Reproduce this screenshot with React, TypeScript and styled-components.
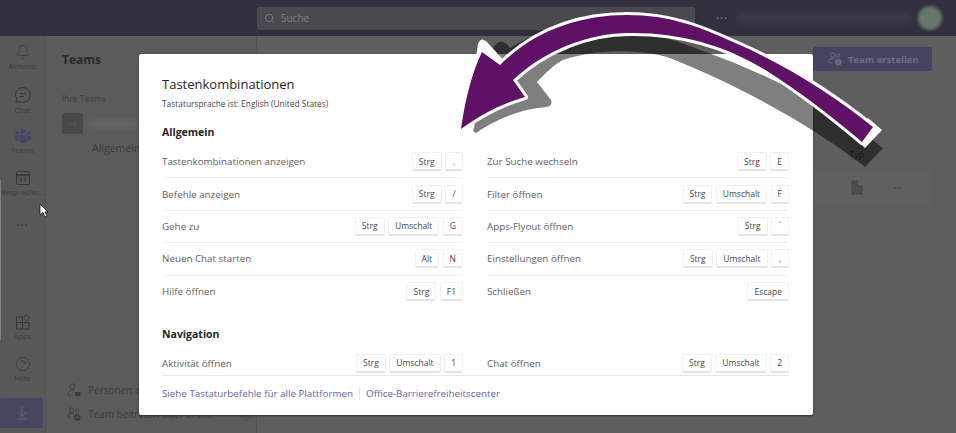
import React from "react";
import styled, { createGlobalStyle } from "styled-components";
import { Bell, CircleHelp, ArrowDownToLine, Search, Settings } from "lucide-react";

const GlobalStyle = createGlobalStyle`
    html, body {
        margin: 0;
        padding: 0;
        background: #595959;
        font-family: "Open Sans", "Noto Sans", sans-serif;
    }
`;

const Page = styled.div`
    position: relative;
    width: 956px;
    height: 433px;
    overflow: hidden;
    display: flex;
    flex-direction: column;
    background: #5a5a5a;
`;

const TopBar = styled.header`
    height: 36px;
    flex: none;
    display: flex;
    align-items: center;
    padding-left: 257px;
    background: #32303e;
`;

const SearchBox = styled.div`
    width: 438px;
    height: 23px;
    display: flex;
    align-items: center;
    gap: 6px;
    padding-left: 7px;
    box-sizing: border-box;
    border-radius: 2px;
    background: #4a4950;
    color: #7d7c83;
    font-size: 10px;
`;

const TopDots = styled.div`
    margin-left: 21px;
    color: #6f6e78;
    font-size: 8px;
    letter-spacing: 1px;
    line-height: 1;
`;

const BlurredName = styled.div`
    width: 172px;
    height: 9px;
    margin-left: 10px;
    background: #3d3c4a;
    filter: blur(3px);
`;

const Avatar = styled.div`
    width: 24px;
    height: 24px;
    margin-left: 8px;
    border-radius: 50%;
    background: #66766a;
    filter: blur(1.5px);
`;

const Body = styled.div`
    flex: 1;
    display: flex;
    min-height: 0;
`;

const Rail = styled.nav`
    position: relative;
    width: 46px;
    flex: none;
    display: flex;
    flex-direction: column;
    align-items: center;
    box-sizing: border-box;
    padding-top: 8px;
    background: #585858;
    border-right: 1px solid #535353;
`;

const RailEdge = styled.div`
    position: absolute;
    left: 0;
    top: 144px;
    width: 1px;
    height: 160px;
    background: #808080;
`;

const RailItem = styled.div<{ $active?: boolean }>`
    width: 100%;
    height: 42px;
    flex: none;
    display: flex;
    flex-direction: column;
    align-items: center;
    color: ${p => (p.$active ? "#45446a" : "#363636")};
    font-size: 7.5px;
    line-height: 10px;
    white-space: nowrap;
    overflow: hidden;

    span {
        margin-top: 1px;
        color: ${p => (p.$active ? "#3f3f4f" : "#3c3c3c")};
    }
`;

const RailDots = styled.div`
    height: 26px;
    color: #3c3c3c;
    font-size: 8px;
    letter-spacing: 1px;
    line-height: 26px;
`;

const RailSpacer = styled.div`
    flex: 1;
`;

const DownloadButton = styled.div`
    align-self: flex-start;
    width: 43px;
    height: 30px;
    flex: none;
    margin-bottom: 5px;
    display: flex;
    align-items: center;
    justify-content: center;
    border-radius: 2px;
    background: #474661;
    color: #75748a;
`;

const ListPanel = styled.aside`
    width: 211px;
    flex: none;
    display: flex;
    flex-direction: column;
    box-sizing: border-box;
    background: #5b5b5b;
    border-right: 1px solid #535353;
`;

const PanelTitle = styled.div`
    padding: 15px 16px 0;
    height: 47px;
    box-sizing: border-box;
    color: #2a2a2a;
    font-size: 12px;
    font-weight: 700;
`;

const TeamsLabel = styled.div`
    padding: 10px 16px 0;
    color: #3d3d3d;
    font-size: 8.5px;
`;

const TeamRow = styled.div`
    display: flex;
    align-items: center;
    gap: 6px;
    padding: 9px 16px 0;
`;

const TeamBadge = styled.div`
    width: 21px;
    height: 21px;
    display: flex;
    align-items: center;
    justify-content: center;
    border-radius: 2px;
    background: #484848;
    color: #5d5d5d;
    font-size: 6px;
`;

const BlurredTeam = styled.div`
    width: 48px;
    height: 8px;
    background: #636363;
    filter: blur(2px);
`;

const Channel = styled.div`
    padding: 7px 0 0 46px;
    color: #3d3d3d;
    font-size: 10.5px;
`;

const PanelFooter = styled.div`
    margin-top: auto;
    padding: 0 0 10px 21px;
    display: flex;
    flex-direction: column;
    gap: 6px;
`;

const FooterItem = styled.div`
    display: flex;
    align-items: center;
    gap: 7px;
    color: #3d3d3d;
    font-size: 10px;
    height: 18px;
    white-space: nowrap;
`;

const FooterGear = styled.div`
    margin-left: 21px;
    display: flex;
`;

const Main = styled.main`
    flex: 1;
    display: flex;
    flex-direction: column;
    align-items: flex-end;
    padding: 11px 24px 0 0;
    background: #5e5e5e;
`;

const CreateButton = styled.div`
    width: 119px;
    height: 24px;
    flex: none;
    display: flex;
    align-items: center;
    gap: 6px;
    padding-left: 15px;
    box-sizing: border-box;
    border-radius: 2px;
    background: #454460;
    color: #6c6b80;
    font-size: 9.5px;
    font-weight: 700;
`;

const TypeLabel = styled.div`
    width: 119px;
    height: 99px;
    padding: 77px 0 0 36px;
    box-sizing: border-box;
    color: #333;
    font-size: 9px;
`;

const TeamTableRow = styled.div`
    width: 119px;
    height: 35px;
    display: flex;
    align-items: center;
    gap: 30px;
    padding-left: 38px;
    box-sizing: border-box;
    background: #606060;
    color: #454545;
    font-size: 8px;
`;

const Dialog = styled.div`
    position: absolute;
    left: 139px;
    top: 54px;
    width: 674px;
    height: 361px;
    display: flex;
    flex-direction: column;
    box-sizing: border-box;
    padding: 0 24px 0 23px;
    background: #fff;
    border-radius: 2px;
    box-shadow: 0 1px 2px rgba(0, 0, 0, 0.5);
`;

const DialogTitle = styled.h1`
    margin: 20px 0 0;
    color: #252423;
    font-size: 13px;
    line-height: 20px;
    font-weight: 500;
`;

const DialogHint = styled.p`
    margin: 3px 0 0;
    color: #484644;
    font-size: 8.4px;
    line-height: 14px;
`;

const ScrollArea = styled.div`
    flex: 1;
    min-height: 0;
    overflow: hidden;
`;

const SectionTitle = styled.h2`
    margin: 0 0 7px;
    color: #252423;
    font-size: 10.5px;
    line-height: 14px;
    font-weight: 700;
`;

const Section = styled.section`
    margin-top: 14px;

    & + & {
        margin-top: 19px;
    }

    & + & ${SectionTitle} {
        margin-bottom: 6px;
    }
`;

const ShortcutGrid = styled.div`
    display: grid;
    grid-template-columns: 301px 302px;
    column-gap: 24px;
`;

const ShortcutRow = styled.div<{ $last?: boolean }>`
    height: 32.4px;
    box-sizing: border-box;
    display: flex;
    align-items: center;
    justify-content: space-between;
    color: #5f5e5c;
    font-size: 9.8px;
    border-bottom: ${p => (p.$last ? "none" : "1px solid #f0f0f0")};
`;

const Keys = styled.div`
    display: flex;
    gap: 3.5px;
`;

const Key = styled.kbd`
    min-width: 18px;
    height: 19px;
    padding: 0 6px;
    box-sizing: border-box;
    display: flex;
    align-items: center;
    justify-content: center;
    border: 1px solid #f0f0f0;
    border-bottom: 2px solid #e4e4e4;
    border-radius: 2px;
    background: #fff;
    color: #484644;
    font-family: inherit;
    font-size: 8.5px;
`;

const DialogFooter = styled.div`
    height: 40px;
    flex: none;
    display: flex;
    align-items: center;
    padding-bottom: 4px;
    box-sizing: border-box;
    border-top: 1px solid #e8e8e8;
    color: #6264a7;
    font-size: 9.8px;
`;

const FooterDivider = styled.span`
    width: 1px;
    height: 13px;
    margin: 0 6px;
    background: #e4e4e4;
`;

const Overlay = styled.svg`
    position: absolute;
    left: 0;
    top: 0;
    pointer-events: none;
`;

const general: [string, string[]][] = [
    ["Tastenkombinationen anzeigen", ["Strg", "."]],
    ["Zur Suche wechseln", ["Strg", "E"]],
    ["Befehle anzeigen", ["Strg", "/"]],
    ["Filter öffnen", ["Strg", "Umschalt", "F"]],
    ["Gehe zu", ["Strg", "Umschalt", "G"]],
    ["Apps-Flyout öffnen", ["Strg", "`"]],
    ["Neuen Chat starten", ["Alt", "N"]],
    ["Einstellungen öffnen", ["Strg", "Umschalt", ","]],
    ["Hilfe öffnen", ["Strg", "F1"]],
    ["Schließen", ["Escape"]],
];

const navigation: [string, string[]][] = [
    ["Aktivität öffnen", ["Strg", "Umschalt", "1"]],
    ["Chat öffnen", ["Strg", "Umschalt", "2"]],
];

const Shortcuts: React.FC<{ rows: [string, string[]][] }> = ({ rows }) => (
    <ShortcutGrid>
        {rows.map(([label, keys], i) => (
            <ShortcutRow key={label} $last={i >= rows.length - 2}>
                {label}
                <Keys>
                    {keys.map(k => (
                        <Key key={k}>{k}</Key>
                    ))}
                </Keys>
            </ShortcutRow>
        ))}
    </ShortcutGrid>
);

const ChatIcon = () => (
    <svg width={18} height={18} viewBox="0 0 18 18" fill="none" stroke="currentColor">
        <path d="M9 1.5a7.5 7.5 0 1 1-3.6 14.1L1.8 16.5l1-3.3A7.5 7.5 0 0 1 9 1.5Z" />
        <path d="M5.8 7.5h6.4M5.8 10.5h4" />
    </svg>
);

const TeamsIcon = () => (
    <svg width={18} height={16} viewBox="0 0 18 16" fill="currentColor">
        <circle cx={9} cy={3.2} r={2.6} />
        <circle cx={3.2} cy={5} r={1.8} />
        <circle cx={14.8} cy={5} r={1.8} />
        <path d="M5.5 6.8h7v5a3.5 3.5 0 0 1-7 0Z" />
        <path d="M.8 7.6h3.6v4.2c0 .5 0 1 .2 1.4C2.4 13.4.8 12 .8 10ZM17.2 7.6h-3.6v4.2c0 .5 0 1-.2 1.4 2.2.2 3.8-1.2 3.8-3.2Z" />
    </svg>
);

const CalendarIcon = () => (
    <svg width={16} height={16} viewBox="0 0 16 16" fill="none" stroke="currentColor">
        <rect x={1.5} y={1.5} width={13} height={13} rx={1} />
        <path d="M1.5 5h13" strokeWidth={1.6} />
        <path d="M5 8h2M5 11h2M9 8h2M9 11h2M6 7.5v4M10 7.5v4" strokeWidth={0.7} />
    </svg>
);

const AppsIcon = () => (
    <svg width={16} height={16} viewBox="0 0 16 16" fill="none" stroke="currentColor">
        <path d="M1.5 3h6v5.5h-6ZM1.5 8.5h6V15h-6ZM7.5 8.5h6.5V15H7.5Z" />
        <path d="M11.5.8 14.8 4l-3.3 3.2L8.3 4Z" />
    </svg>
);

const InviteIcon = () => (
    <svg width={14} height={14} viewBox="0 0 14 14" fill="none" stroke="currentColor" strokeWidth={0.9}>
        <circle cx={5.5} cy={3.5} r={2.6} />
        <path d="M.8 11.5c0-3 2-4 4.5-4 .7 0 1.3.1 1.8.3M.8 11.5c0 .8.8 1.2 3.2 1.2" />
        <rect x={8} y={9} width={5.4} height={4} fill="currentColor" stroke="none" />
    </svg>
);

const TeamAddIcon = () => (
    <svg width={14} height={14} viewBox="0 0 14 14" fill="none" stroke="currentColor" strokeWidth={0.9}>
        <circle cx={4.5} cy={3} r={2.2} />
        <circle cx={10} cy={3.6} r={1.7} />
        <path d="M1 9c0-1.8 1.2-2.6 3.5-2.6S7 7 7 8M1 9c0 1.2 1 2 3 2" />
        <circle cx={10.3} cy={10.3} r={3.2} fill="currentColor" stroke="none" />
        <path d="M10.3 8.6v3.4M8.6 10.3H12" stroke="#5b5b5b" />
    </svg>
);

const BuildingIcon = () => (
    <svg width={12} height={15} viewBox="0 0 12 15" fill="#4d4d4d" stroke="#3f3f3f" strokeWidth={0.7}>
        <path d="M1 1h5.5v5H11v8H1Z" />
        <path d="M3 3.5h2M3 6.5h2M3 9.5h2M8 9h1.5M8 11.5h1.5" />
    </svg>
);

const Arrow: React.FC = () => (
    <Overlay width={956} height={433} viewBox="0 0 956 433">
        <path
            d="M883 148 L865 167 C815 127 733 82 667 57 C640 50 600 48 563 60 C553 65 545 74 537 82 L551 100 Q553 106 546 107 C520 109 495 120 476 133 Q472 132 474 128 L480 90 L492 50 Q500 34 510 48 C560 15 640 25 700 50 C770 75 830 105 883 148 Z"
            fill="#000"
            fillOpacity={0.5}
        />
        <path d="M471 90 L478 44 Q481 36 487 42 L506 63 L490 75 Z" fill="#fff" />
        <path d="M868 118 L882 130 L865 148 L852 136 Z" fill="#fff" />
        <path
            d="M873 127 L862 142 C830 115 800 92 767 71 C725 45 680 33 633 33 C590 32 545 50 513 80 L525 97 C500 104 480 115 461 129 C465 100 472 72 482 52 L500 65 C535 30 580 15 627 15 C670 15 700 27 733 42 C780 62 830 92 873 127 Z"
            fill="#5f1166"
            stroke="#fff"
            strokeWidth={6}
            strokeLinejoin="round"
            paintOrder="stroke"
        />
    </Overlay>
);

const Cursor: React.FC = () => (
    <Overlay width={956} height={433} viewBox="0 0 956 433">
        <path d="M40 204 L40 215 L43 212.5 L45 217 L47 216 L45 212 L48 212 Z" fill="#fff" stroke="#111" strokeWidth={0.8} />
    </Overlay>
);

export default function App() {
    return (
        <Page>
            <GlobalStyle />
            <TopBar>
                <SearchBox>
                    <Search size={11} />
                    Suche
                </SearchBox>
                <TopDots>•••</TopDots>
                <BlurredName />
                <Avatar />
            </TopBar>
            <Body>
                <Rail>
                    <RailEdge />
                    <RailItem>
                        <Bell size={16} strokeWidth={1} />
                        <span>Aktivität</span>
                    </RailItem>
                    <RailItem>
                        <ChatIcon />
                        <span>Chat</span>
                    </RailItem>
                    <RailItem $active>
                        <TeamsIcon />
                        <span>Teams</span>
                    </RailItem>
                    <RailItem>
                        <CalendarIcon />
                        <span>Besprechu...</span>
                    </RailItem>
                    <RailDots>•••</RailDots>
                    <RailSpacer />
                    <RailItem>
                        <AppsIcon />
                        <span>Apps</span>
                    </RailItem>
                    <RailItem>
                        <CircleHelp size={16} strokeWidth={1} />
                        <span>Hilfe</span>
                    </RailItem>
                    <DownloadButton>
                        <ArrowDownToLine size={16} strokeWidth={1} />
                    </DownloadButton>
                </Rail>
                <ListPanel>
                    <PanelTitle>Teams</PanelTitle>
                    <TeamsLabel>Ihre Teams</TeamsLabel>
                    <TeamRow>
                        <TeamBadge>KB</TeamBadge>
                        <BlurredTeam />
                    </TeamRow>
                    <Channel>Allgemein</Channel>
                    <PanelFooter>
                        <FooterItem>
                            <InviteIcon />
                            Personen e
                        </FooterItem>
                        <FooterItem>
                            <TeamAddIcon />
                            Team beitreten oder erst...
                            <FooterGear>
                                <Settings size={13} strokeWidth={1} />
                            </FooterGear>
                        </FooterItem>
                    </PanelFooter>
                </ListPanel>
                <Main>
                    <CreateButton>
                        <TeamAddIcon />
                        Team erstellen
                    </CreateButton>
                    <TypeLabel>Typ</TypeLabel>
                    <TeamTableRow>
                        <BuildingIcon />
                        •••
                    </TeamTableRow>
                </Main>
            </Body>
            <Dialog>
                <DialogTitle>Tastenkombinationen</DialogTitle>
                <DialogHint>Tastatursprache ist: English (United States)</DialogHint>
                <ScrollArea>
                    <Section>
                        <SectionTitle>Allgemein</SectionTitle>
                        <Shortcuts rows={general} />
                    </Section>
                    <Section>
                        <SectionTitle>Navigation</SectionTitle>
                        <Shortcuts rows={navigation} />
                    </Section>
                </ScrollArea>
                <DialogFooter>
                    Siehe Tastaturbefehle für alle Plattformen
                    <FooterDivider />
                    Office-Barrierefreiheitscenter
                </DialogFooter>
            </Dialog>
            <Cursor />
            <Arrow />
        </Page>
    );
}
